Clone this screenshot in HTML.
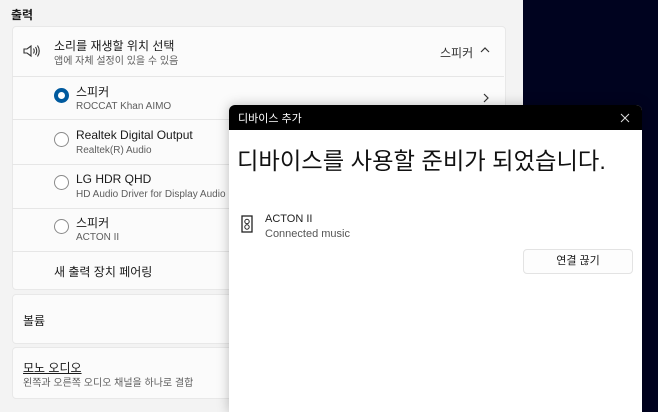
<!DOCTYPE html><html><head><meta charset="utf-8"><style>
body{margin:0;width:658px;height:412px;overflow:hidden;background:#f3f3f3;font-family:"Liberation Sans","Noto Sans CJK KR",sans-serif;position:relative;color:#1a1a1a}
.a{position:absolute}
.card{position:absolute;left:12px;width:492px;background:#fbfbfb;border:1px solid #e8e8e8;border-radius:4px}
.sep{position:absolute;left:12px;width:492px;height:1px;background:#e6e6e6}
.t{font-size:12px;white-space:nowrap}
.s{font-size:10px;color:#5d5d5d;white-space:nowrap}
.rad{position:absolute;left:54px;width:13px;height:13px;border:1px solid #8a8a8a;border-radius:50%;background:#fff}
</style></head><body>
<div class="a t" style="left:11px;top:6px;font-weight:bold">출력</div>
<div class="card" style="top:26px;height:262px"></div>
<div class="sep" style="top:76px"></div>
<div class="sep" style="top:119px"></div>
<div class="sep" style="top:164px"></div>
<div class="sep" style="top:208px"></div>
<div class="sep" style="top:251px"></div>
<svg class="a" style="left:23px;top:44px" width="18" height="14" viewBox="0 0 18 14" fill="none" stroke="#333" stroke-width="1.1"><path d="M1 5h3l4-3v10l-4-3H1z"/><path d="M10.5 4.5q1.5 2.5 0 5M12.5 3q2.5 4 0 8M14.5 1.5q3.5 5.5 0 11"/></svg>
<div class="a t" style="left:54px;top:37px">소리를 재생할 위치 선택</div>
<div class="a s" style="left:54px;top:52px">앱에 자체 설정이 있을 수 있음</div>
<div class="a t" style="left:440px;top:44px;color:#333">스피커</div>
<svg class="a" style="left:480px;top:46px" width="10" height="8"><path d="M1 6l4-4 4 4" fill="none" stroke="#333" stroke-width="1.2"/></svg>
<div class="rad" style="top:88px;border:4px solid #005a9e;width:7px;height:7px"></div>
<div class="a t" style="left:76px;top:83px">스피커</div><div class="a s" style="left:76px;top:101px">ROCCAT Khan AIMO</div>
<svg class="a" style="left:482px;top:93px" width="8" height="10"><path d="M2 1l4 4-4 4" fill="none" stroke="#333" stroke-width="1.2"/></svg>
<div class="rad" style="top:132px"></div>
<div class="a t" style="left:76px;top:128px">Realtek Digital Output</div><div class="a s" style="left:76px;top:145px">Realtek(R) Audio</div>
<div class="rad" style="top:175px"></div>
<div class="a t" style="left:76px;top:172px">LG HDR QHD</div><div class="a s" style="left:76px;top:189px">HD Audio Driver for Display Audio</div>
<div class="rad" style="top:219px"></div>
<div class="a t" style="left:76px;top:214px">스피커</div><div class="a s" style="left:76px;top:232px">ACTON II</div>
<div class="a t" style="left:54px;top:263px">새 출력 장치 페어링</div>
<div class="card" style="top:294px;height:48px"></div>
<div class="a t" style="left:23px;top:312px">볼륨</div>
<div class="card" style="top:347px;height:50px"></div>
<div class="a t" style="left:23px;top:359px;text-decoration:underline">모노 오디오</div>
<div class="a s" style="left:23px;top:374px">왼쪽과 오른쪽 오디오 채널을 하나로 결합</div>
<div class="a" style="left:523px;top:0;width:135px;height:412px;background:#00031f"></div>
<div class="a" style="left:229px;top:105px;width:413px;height:307px;background:#fff;border-radius:6px 6px 0 0;overflow:hidden;box-shadow:0 0 12px rgba(0,0,0,.25)">
<div class="a" style="left:0;top:0;width:413px;height:25px;background:#000"></div>
<div class="a" style="left:9px;top:5px;font-size:11px;color:#fff">디바이스 추가</div>
<svg class="a" style="left:391px;top:8px" width="10" height="10"><path d="M1 1l8 8M9 1l-8 8" stroke="#ddd" stroke-width="1"/></svg>
<div class="a" style="left:8px;top:37px;font-size:23.3px;color:#111;white-space:nowrap">디바이스를 사용할 준비가 되었습니다.</div>
<svg class="a" style="left:12px;top:110px" width="12" height="18"><rect x="1" y="1" width="10" height="16" fill="none" stroke="#222" stroke-width="1.3"/><circle cx="6" cy="6.5" r="2.2" fill="none" stroke="#222"/><circle cx="6" cy="12" r="2.2" fill="none" stroke="#222"/></svg>
<div class="a" style="left:36px;top:108px;font-size:11px;color:#222">ACTON II</div>
<div class="a" style="left:36px;top:123px;font-size:11px;color:#555">Connected music</div>
<div class="a" style="left:294px;top:144px;width:108px;height:23px;border:1px solid #e3e3e3;border-radius:4px;background:#fdfdfd;font-size:11px;text-align:center;line-height:23px">연결 끊기</div>
</div>
</body></html>
